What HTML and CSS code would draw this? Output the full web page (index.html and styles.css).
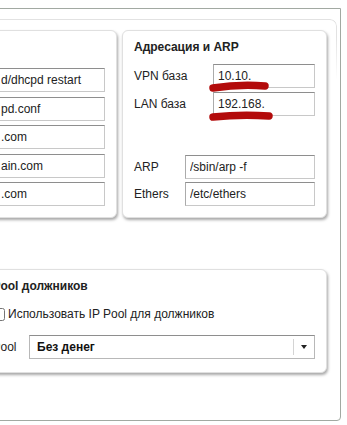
FILE: index.html
```html
<!DOCTYPE html>
<html lang="ru">
<head>
    <meta charset="UTF-8">
    <meta name="viewport" content="width=device-width, initial-scale=1.0">
    <title>Настройки DHCP</title>
    <link rel="stylesheet" href="styles.css">
</head>
<body>

    <div class="frame">
        <div class="panel">

            <!-- Верхний ряд карточек -->
            <div class="cards">
                <div class="card card-dhcp">
                    <div class="fields">
                        <input class="input" type="text" value="d/dhcpd restart">
                        <input class="input" type="text" value="pd.conf">
                        <input class="input" type="text" value=".com">
                        <input class="input" type="text" value="ain.com">
                        <input class="input" type="text" value=".com">
                    </div>
                </div>

                <div class="card card-arp">
                    <div class="card-title">Адресация и ARP</div>
                    <div class="fields fields-wide">
                        <label class="field"><span class="field-label">VPN база</span><input class="input" type="text" value="10.10."></label>
                        <label class="field"><span class="field-label">LAN база</span><input class="input" type="text" value="192.168."></label>
                    </div>
                    <div class="fields fields-arp">
                        <label class="field"><span class="field-label">ARP</span><input class="input" type="text" value="/sbin/arp -f"></label>
                        <label class="field"><span class="field-label">Ethers</span><input class="input" type="text" value="/etc/ethers"></label>
                    </div>

                    <!-- Пометки маркером -->
                    <svg class="marks" width="203" height="186">
                        <path d="M90 57 Q116 53 142 55" />
                        <path d="M90 86 Q118 83 146 85" />
                    </svg>
                </div>
            </div>

            <!-- Пул должников -->
            <div class="card card-pool">
                <div class="card-title">IP Pool должников</div>
                <label class="check"><input type="checkbox"><span>Использовать IP Pool для должников</span></label>
                <div class="field">
                    <span class="field-label">IP Pool</span>
                    <div class="select">
                        <span class="select-value">Без денег</span>
                        <span class="select-arrow"></span>
                    </div>
                </div>
            </div>

        </div>
    </div>

</body>
</html>
```

FILE: styles.css
```css
/* Основа */
body {
    margin: 0;
    height: 425px;
    overflow: hidden;
    background: #fff;
    font-family: "Liberation Sans", Arial, sans-serif;
    font-size: 12px;
    color: #222;
}

/* Внешняя рамка */
.frame {
    height: 401px;
    margin: 8px 6px 0 -48px;
    padding: 10px 3px 0 0;
    border: 1px solid #a2a9a2;
    border-radius: 0 0 4px 0;
}

/* Панель вкладки */
.panel {
    position: relative;
    padding: 11px 10px 0 13px;
}

.panel::before {
    content: "";
    position: absolute;
    top: 0;
    left: 0;
    right: 0;
    height: 60px;
    border-top: 1px solid #e2e2e2;
    border-right: 1px solid #e2e2e2;
    border-top-right-radius: 7px;
    -webkit-mask-image: linear-gradient(#000 30%, transparent);
}

.cards {
    display: flex;
    gap: 5px;
}

/* Карточки */
.card {
    position: relative;
    background: #fff;
    border: 1px solid #e0e0e0;
    border-radius: 6px;
    box-shadow: 1px 2px 3px rgba(0, 0, 0, 0.35);
    padding: 9px 11px 11px;
}

.card-dhcp {
    flex: 1;
    min-width: 0;
}

.card-arp {
    flex: none;
    width: 205px;
    box-sizing: border-box;
}

.card-title {
    font-weight: bold;
    line-height: 14px;
}

/* Поля */
.fields {
    display: flex;
    flex-direction: column;
    gap: 4px;
    margin-top: 10px;
}

.card-dhcp .fields {
    margin-top: 28px;
    gap: 4.5px;
}

.fields-arp {
    margin-top: 39px;
    gap: 3px;
}

.field {
    display: flex;
    align-items: center;
}

.field-label {
    flex: none;
    width: 51px;
}

.fields-wide .field-label {
    width: 79px;
}

.input {
    flex: 1;
    min-width: 0;
    width: 100%;
    height: 24px;
    box-sizing: border-box;
    margin: 0;
    padding: 0 4px;
    border: 1px solid #c8c8c8;
    border-top-color: #8e8e8e;
    border-left-color: #ababab;
    font: inherit;
    color: #222;
    outline: none;
}

.card-dhcp .input {
    flex: none;
    width: auto;
    margin-left: 18px;
}

/* Пометки маркером поверх полей */
.marks {
    position: absolute;
    top: 0;
    left: 0;
    pointer-events: none;
}

.marks path {
    fill: none;
    stroke: #b30b0b;
    stroke-width: 7.5;
    stroke-linecap: round;
}

/* Пул должников */
.card-pool {
    margin-top: 51px;
    padding-bottom: 13px;
}

.check {
    display: flex;
    align-items: center;
    margin-top: 13px;
    line-height: 16px;
}

.check input {
    width: 13px;
    height: 13px;
    margin: 0 3px 0 14px;
}

.card-pool .field {
    margin-top: 13px;
}

.select {
    flex: 1;
    display: flex;
    align-items: center;
    height: 24px;
    box-sizing: border-box;
    border: 1px solid #b8b8b8;
    border-top-color: #8e8e8e;
    font-weight: bold;
    color: #111;
}

.select-value {
    flex: 1;
    padding-left: 7px;
}

.select-arrow {
    display: flex;
    align-items: center;
    justify-content: center;
    width: 20px;
    height: 16px;
    border-left: 1px solid #d4d4d4;
}

.select-arrow::after {
    content: "";
    border-left: 3.5px solid transparent;
    border-right: 3.5px solid transparent;
    border-top: 4px solid #222;
}
```
